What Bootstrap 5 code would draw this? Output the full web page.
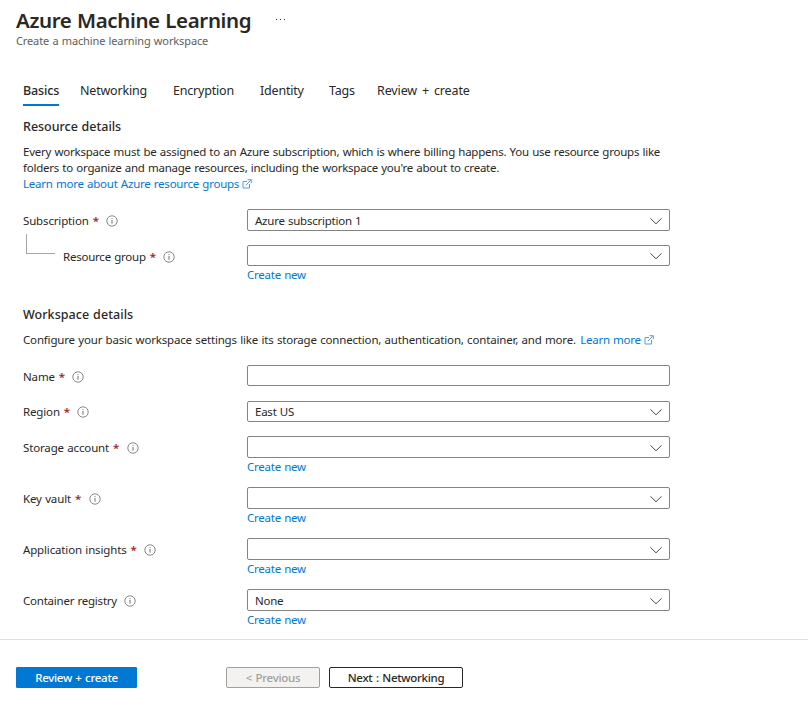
<!DOCTYPE html>
<html lang="en">
<head>
<meta charset="utf-8">
<meta name="viewport" content="width=device-width, initial-scale=1">
<title>Azure Machine Learning</title>
<link href="https://cdn.jsdelivr.net/npm/bootstrap@5.3.0/dist/css/bootstrap.min.css" rel="stylesheet">
<style>
body{font-family:"Noto Sans","Open Sans",sans-serif;font-size:11.5px;letter-spacing:-.238px;word-spacing:.55px;line-height:16px;color:#292827;background:#fff;height:722px;overflow:hidden}
a{color:#0078d4;text-decoration:none}
.page-head{height:73px;padding:6px 16px 0}
.page-title{font-size:20.5px;line-height:28px;font-weight:600;letter-spacing:-.36px}
.page-sub{font-size:11px;line-height:14px;letter-spacing:-.12px;color:#605e5c}
.more-dots{margin:12px 0 0 25px}
.steps{height:33px;padding-left:23px}
.steps .nav-link{padding:0;height:33px;line-height:36px;font-size:12.5px;letter-spacing:-.2px;color:#292827;border-bottom:2px solid transparent}
.steps .nav-link.active{font-weight:500;letter-spacing:-.15px;border-color:#0078d4}
.steps .wide{letter-spacing:-.12px;word-spacing:1.8px}
.w-a{width:57px}.w-b{width:93px}.w-c{width:87px}.w-d{width:69px}.w-e{width:48px}
.form-area{height:534px;padding:12px 0 0 23px;border-bottom:1px solid #dfdedd}
.sect{font-size:12.5px;font-weight:500;line-height:18px;letter-spacing:-.02px}
.intro{width:647px;margin-top:8px;margin-bottom:17px}
.intro-work{letter-spacing:-.175px}
.intro-work a{margin-left:1px;letter-spacing:-.25px}
.field-row{display:grid;grid-template-columns:224px 423px;height:36px}
.field-row.near{height:35px}
.field-row.tall{height:51px}
.lab{height:23px;display:flex;align-items:center;letter-spacing:-.15px}
.lab.tight{letter-spacing:-.23px}
.near .lab{height:22px}
.req{color:#a4262c;font-weight:600;font-size:11.5px;margin-left:4px}
.info{margin-left:7.500px}
.box{height:22px;border:1px solid #858483;border-radius:2px;padding:1px 6px 0 7px;display:flex;align-items:center;justify-content:space-between;color:#292827}
.box.short{height:21px}
.mk{display:block;height:16px;line-height:16px;margin-top:1px;width:max-content}
.branch{width:29px;height:20px;margin:-11px 8px 0 3px;border-left:1px solid #a6a5a4;border-bottom:1px solid #a6a5a4;align-self:flex-start}
.work-sect{margin-top:10px;letter-spacing:.06px}
.actions{padding:27px 16px 0}
.act{height:21px;border-radius:2px;padding:0;font-size:11.5px;line-height:19px;font-weight:500;letter-spacing:-.3px;word-spacing:.8px;border-width:1px}
.act-main,.act-main:hover{width:121px;background:#0078d4;border-color:#0078d4;color:#fff;border-radius:1px}
.act-prev,.act-prev:disabled{width:94px;margin-left:89px;background:#f3f2f1;border-color:#a19f9d;color:#a19f9d;opacity:1}
.act-next{width:134px;margin-left:9px;background:#fff;border-color:#292827;color:#292827}
.ext{margin-left:3px;vertical-align:-1px}
</style>
<script src="https://cdn.jsdelivr.net/npm/bootstrap@5.3.0/dist/js/bootstrap.bundle.min.js"></script>
</head>
<body>
<svg width="0" height="0" class="d-none">
<symbol id="info" viewBox="0 0 12 12"><circle cx="6" cy="6" r="5.200" fill="none" stroke="#747372" stroke-width=".85"/><path d="M6 5v3.700M6 3.200v.9" stroke="#605e5c" stroke-width=".9"/></symbol>
<symbol id="chev" viewBox="0 0 14 8"><path d="M1.400 1.300 7 6.800l5.600-5.500" fill="none" stroke="#4b4a49" stroke-width="1"/></symbol>
<symbol id="ext" viewBox="0 0 10 10"><path d="M5 2.500H1v6.500h6.500V5M3.800 6.200 8.700 1.200M5.500 .7H9.300v3.600" fill="none" stroke="#5b8fe0" stroke-width=".95"/></symbol>
</svg>
<header class="page-head">
  <div class="d-flex align-items-start"><h1 class="page-title mb-0">Azure Machine Learning</h1>
  <svg class="more-dots" width="10" height="3"><path d="M0 1h1v1H0zM4 1h1v1H4zM8 1h1v1H8z" fill="#323130"/></svg></div>
  <div class="page-sub">Create a machine learning workspace</div>
</header>
<nav class="steps nav flex-nowrap">
  <div class="w-a d-flex"><a class="nav-link active" href="#">Basics</a></div>
  <div class="w-b d-flex"><a class="nav-link" href="#">Networking</a></div>
  <div class="w-c d-flex"><a class="nav-link" href="#">Encryption</a></div>
  <div class="w-d d-flex"><a class="nav-link" href="#">Identity</a></div>
  <div class="w-e d-flex"><a class="nav-link" href="#">Tags</a></div>
  <div class="d-flex"><a class="nav-link wide" href="#">Review + create</a></div>
</nav>
<main class="form-area">
  <h2 class="sect mb-0">Resource details</h2>
  <div class="intro">Every workspace must be assigned to an Azure subscription, which is where billing happens. You use resource groups like<br>folders to organize and manage resources, including the workspace you're about to create.<br><a href="#">Learn more about Azure resource groups<svg class="ext" width="10" height="10"><use href="#ext"/></svg></a></div>
  <div class="field-row"><div class="lab">Subscription<span class="req">*</span><svg class="info" width="12" height="12"><use href="#info"/></svg></div>
    <div><div class="box">Azure subscription 1<svg width="14" height="8"><use href="#chev"/></svg></div></div></div>
  <div class="field-row tall"><div class="lab tight"><span class="branch"></span>Resource group<span class="req">*</span><svg class="info" width="12" height="12"><use href="#info"/></svg></div>
    <div><div class="box short"><span></span><svg width="14" height="8"><use href="#chev"/></svg></div><a class="mk" href="#">Create new</a></div></div>
  <h2 class="sect work-sect mb-0">Workspace details</h2>
  <div class="intro intro-work">Configure your basic workspace settings like its storage connection, authentication, container, and more. <a href="#">Learn more<svg class="ext" width="10" height="10"><use href="#ext"/></svg></a></div>
  <div class="field-row"><div class="lab">Name<span class="req">*</span><svg class="info" width="12" height="12"><use href="#info"/></svg></div><div><div class="box short"></div></div></div>
  <div class="field-row near"><div class="lab">Region<span class="req">*</span><svg class="info" width="12" height="12"><use href="#info"/></svg></div>
    <div><div class="box short">East US<svg width="14" height="8"><use href="#chev"/></svg></div></div></div>
  <div class="field-row tall"><div class="lab">Storage account<span class="req">*</span><svg class="info" width="12" height="12"><use href="#info"/></svg></div>
    <div><div class="box"><span></span><svg width="14" height="8"><use href="#chev"/></svg></div><a class="mk" href="#">Create new</a></div></div>
  <div class="field-row tall"><div class="lab">Key vault<span class="req">*</span><svg class="info" width="12" height="12"><use href="#info"/></svg></div>
    <div><div class="box"><span></span><svg width="14" height="8"><use href="#chev"/></svg></div><a class="mk" href="#">Create new</a></div></div>
  <div class="field-row tall"><div class="lab">Application insights<span class="req">*</span><svg class="info" width="12" height="12"><use href="#info"/></svg></div>
    <div><div class="box"><span></span><svg width="14" height="8"><use href="#chev"/></svg></div><a class="mk" href="#">Create new</a></div></div>
  <div class="field-row tall"><div class="lab tight">Container registry<svg class="info" width="12" height="12"><use href="#info"/></svg></div>
    <div><div class="box">None<svg width="14" height="8"><use href="#chev"/></svg></div><a class="mk" href="#">Create new</a></div></div>
</main>
<footer class="actions d-flex">
  <button class="btn act act-main">Review + create</button>
  <button class="btn act act-prev" disabled>&lt; Previous</button>
  <button class="btn act act-next">Next : Networking</button>
</footer>
</body>
</html>
